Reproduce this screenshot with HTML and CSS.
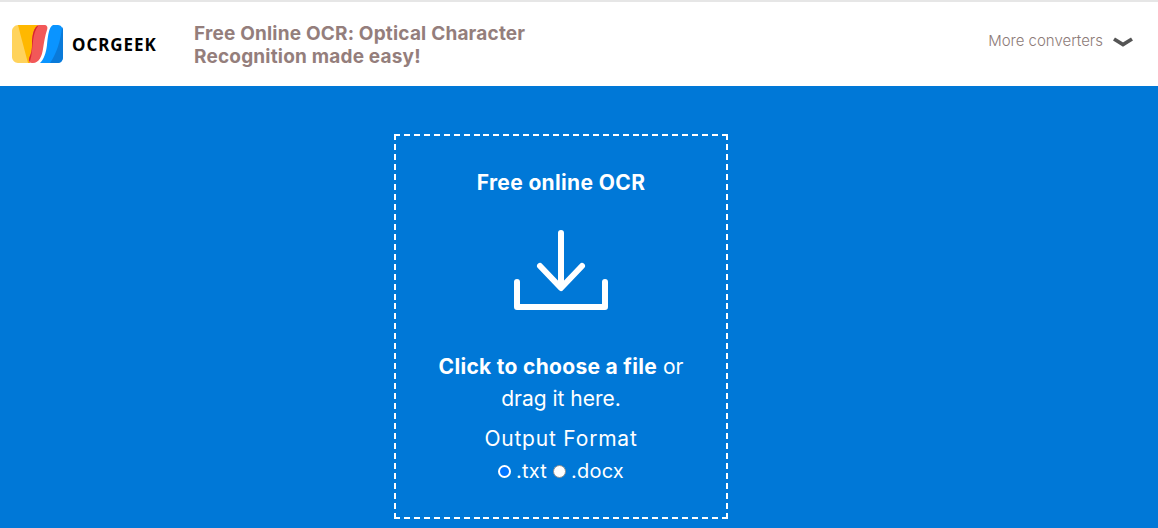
FILE: index.html
```html
<!DOCTYPE html>
<html lang="en">
<head>
    <meta charset="UTF-8">
    <meta name="viewport" content="width=device-width, initial-scale=1.0">
    <title>OCRGeek - Free Online OCR</title>
    <link rel="stylesheet" href="styles.css">
</head>
<body>
    <header class="header">
        <a href="#" class="brand">
            <svg class="brand-mark" width="52" height="38" viewBox="0 0 52 38">
                <path d="M6 0H26C23 6 21 10 21 17C21 25 20 32 18 38H6C3 38 0 35 0 32V6C0 3 3 0 6 0Z" fill="#ffd35c"/>
                <path d="M6 0H26C23 6 21 10 21 17C21 25 20 32 18 38H16C14 30 9 12 6 0Z" fill="#ffb800"/>
                <path d="M27 0H32C35 0 36 2 35 5C33 11 32 17 31 24C30 31 27 38 21 38C18 38 16 37 17 34C18 30 20 28 20 20C20 12 21 2 27 0Z" fill="#f25858"/>
                <path d="M27 0C21 2 20 12 20 20C20 28 18 30 17 34C17 35 17 36 18 36C20 30 20 24 21 16C22 8 24 3 27 0Z" fill="#d9262c"/>
                <path d="M41 0H46C49 0 51 3 51 6V32C51 35 49 38 46 38H28C32 34 34 28 35 20C36 10 37 2 41 0Z" fill="#0a94ff"/>
                <path d="M50 2C51 3 51 5 51 6V32C51 35 49 38 46 38H38C44 30 49 15 50 2Z" fill="#0a7ad9"/>
            </svg>
            <span class="brand-name">OCRGEEK</span>
        </a>
        <h1 class="tagline">Free Online OCR: Optical Character Recognition made easy!</h1>
        <button class="more">
            More converters
            <svg class="more-arrow" width="20" height="10" viewBox="0 0 20 10">
                <path d="M1 2L10 7.5L19 2" fill="none" stroke="#555" stroke-width="3.8"/>
            </svg>
        </button>
    </header>

    <main class="upload-section">
        <div class="dropzone">
            <h2 class="dropzone-title">Free online OCR</h2>
            <svg class="upload-icon" width="96" height="82" viewBox="0 0 96 82">
                <path d="M48 4V58M27 37L48 59L69 37M4 53V78H92V53" fill="none" stroke="#fff" stroke-width="6" stroke-linecap="round" stroke-linejoin="round"/>
            </svg>
            <p class="dropzone-text"><strong>Click to choose a file</strong> or<br>drag it here.</p>
            <p class="format-label">Output Format</p>
            <div class="format-options">
                <label><span class="radio radio-checked"></span>.txt</label>
                <label><span class="radio"></span>.docx</label>
            </div>
        </div>
    </main>
</body>
</html>
```

FILE: styles.css
```css
* {
    margin: 0;
    padding: 0;
    box-sizing: border-box;
}

body {
    font-family: Inter, "Open Sans", sans-serif;
    height: 528px;
    overflow: hidden;
    background: #0078d7;
}

.header {
    display: flex;
    align-items: center;
    height: 86px;
    padding: 0 25px 0 12px;
    background: #ffffff;
    border-top: 2px solid #e6e6e6;
}

.brand {
    display: flex;
    align-items: center;
    width: 182px;
    text-decoration: none;
}

.brand-mark {
    flex: none;
    margin-right: 8px;
}

.brand-name {
    font-family: "Noto Sans", sans-serif;
    font-size: 17px;
    font-weight: 700;
    letter-spacing: 0.95px;
    color: #000;
}

.tagline {
    width: 350px;
    margin-top: 1px;
    font-size: 19px;
    font-weight: 700;
    line-height: 23px;
    letter-spacing: 0.19px;
    color: #947e7c;
}

.more {
    display: flex;
    align-items: center;
    gap: 10px;
    margin-left: auto;
    margin-bottom: 8px;
    border: 0;
    background: none;
    font-family: Inter, sans-serif;
    font-size: 15px;
    font-weight: 300;
    color: #8d7b78;
}

.more-arrow {
    margin-top: 4px;
}

.upload-section {
    padding: 48px 36px 0 0;
}

/* drawn with gradients to get 6px dashes, the border keyword gives shorter ones */
.dropzone {
    width: 334px;
    height: 385px;
    margin: 0 auto;
    padding-top: 37px;
    background:
        repeating-linear-gradient(90deg, #fff 0 6px, transparent 6px 9.94px) top / 100% 2px no-repeat,
        repeating-linear-gradient(90deg, #fff 0 6px, transparent 6px 9.94px) bottom / 100% 2px no-repeat,
        repeating-linear-gradient(180deg, #fff 0 6px, transparent 6px 9.97px) left / 2px 100% no-repeat,
        repeating-linear-gradient(180deg, #fff 0 6px, transparent 6px 9.97px) right / 2px 100% no-repeat;
    color: #fff;
    text-align: center;
}

.dropzone-title {
    font-size: 21px;
    font-weight: 700;
    line-height: 24px;
    letter-spacing: 0.35px;
}

.upload-icon {
    display: block;
    margin: 34px auto 0;
}

.dropzone-text {
    margin-top: 40px;
    font-size: 21px;
    line-height: 32px;
}

.dropzone-text strong {
    letter-spacing: 0.3px;
}

.format-label {
    margin-top: 8px;
    font-size: 21px;
    line-height: 32px;
    letter-spacing: 0.8px;
}

.format-options {
    display: flex;
    justify-content: center;
    gap: 6px;
    font-size: 20px;
    line-height: 32px;
    letter-spacing: 0.2px;
}

.format-options label {
    display: flex;
    align-items: center;
    gap: 5px;
}

.radio {
    width: 13px;
    height: 13px;
    border-radius: 50%;
    background: #fff;
    border: 1px solid #8f8f8f;
}

.radio-checked {
    border: 2px solid #fff;
    background: #0075ff;
}
```
